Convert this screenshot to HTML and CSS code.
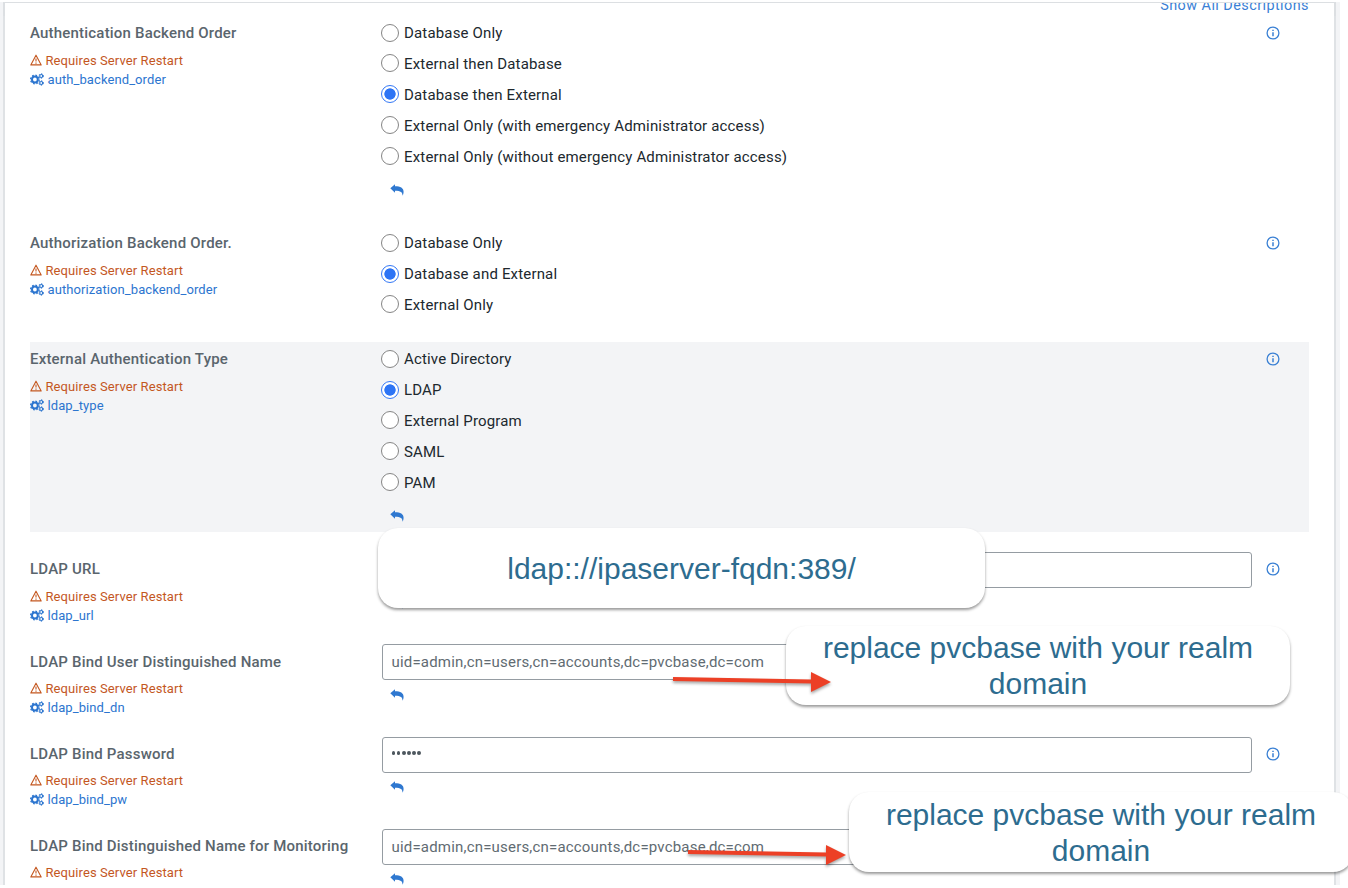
FILE: index.html
```
<!DOCTYPE html>
<html lang="en">
<head>
<meta charset="utf-8">
<title>Authentication settings</title>
<link rel="stylesheet" href="styles.css">
</head>
<body>
<svg class="sprite" width="0" height="0">
  <symbol id="warn" viewBox="0 0 12 12"><path d="M6 1.2 11.2 10.9H.8Z" fill="none" stroke="currentColor" stroke-width="1.1" stroke-linejoin="round"/><path d="M6 4.4v3.2M6 8.5v1.2" stroke="currentColor" stroke-width="1.1"/></symbol>
  <symbol id="gears" viewBox="0 0 14 13"><circle cx="4.9" cy="6.5" r="2.9" fill="none" stroke="currentColor" stroke-width="2"/><circle cx="4.9" cy="6.5" r="4.3" fill="none" stroke="currentColor" stroke-width="1.3" stroke-dasharray="1.7 1.677"/><circle cx="11.2" cy="3" r="1.5" fill="none" stroke="currentColor" stroke-width="1.2"/><circle cx="11.2" cy="3" r="2.3" fill="none" stroke="currentColor" stroke-width=".9" stroke-dasharray="1.2 1.209"/><circle cx="11.2" cy="10" r="1.5" fill="none" stroke="currentColor" stroke-width="1.2"/><circle cx="11.2" cy="10" r="2.3" fill="none" stroke="currentColor" stroke-width=".9" stroke-dasharray="1.2 1.209"/></symbol>
  <symbol id="undo" viewBox="0 0 14 12"><path d="M.3 4.3 5 .3V2.3C10.500 2.300 13.600 4 13.600 8c0 1.500-.4 2.700-1.100 3.700.1-3.400-1.700-4.900-7.500-4.900V8.800Z" fill="currentColor"/></symbol>
  <symbol id="info" viewBox="0 0 14 14"><circle cx="7" cy="7" r="5.9" fill="none" stroke="currentColor" stroke-width="1.3"/><path d="M7 6.200v4M7 3.800v1.300" stroke="currentColor" stroke-width="1.500"/></symbol>
</svg>
<div class="page">
  <div class="topbar"><a class="show-all">Show All Descriptions</a></div>
  <main class="settings">
    <section class="row tall">
      <div class="label"><h3>Authentication Backend Order</h3><p class="restart"><svg><use href="#warn"/></svg>Requires Server Restart</p><a class="key"><svg><use href="#gears"/></svg>auth_backend_order</a></div>
      <div class="field">
        <div class="option"><i class="radio"></i>Database Only</div>
        <div class="option"><i class="radio"></i>External then Database</div>
        <div class="option"><i class="radio on"></i>Database then External</div>
        <div class="option"><i class="radio"></i>External Only (with emergency Administrator access)</div>
        <div class="option"><i class="radio"></i>External Only (without emergency Administrator access)</div>
        <svg class="undo"><use href="#undo"/></svg>
      </div>
      <svg class="info"><use href="#info"/></svg>
    </section>
    <section class="row medium">
      <div class="label"><h3>Authorization Backend Order.</h3><p class="restart"><svg><use href="#warn"/></svg>Requires Server Restart</p><a class="key"><svg><use href="#gears"/></svg>authorization_backend_order</a></div>
      <div class="field">
        <div class="option"><i class="radio"></i>Database Only</div>
        <div class="option"><i class="radio on"></i>Database and External</div>
        <div class="option"><i class="radio"></i>External Only</div>
      </div>
      <svg class="info"><use href="#info"/></svg>
    </section>
    <section class="row tall active">
      <div class="label"><h3>External Authentication Type</h3><p class="restart"><svg><use href="#warn"/></svg>Requires Server Restart</p><a class="key"><svg><use href="#gears"/></svg>ldap_type</a></div>
      <div class="field">
        <div class="option"><i class="radio"></i>Active Directory</div>
        <div class="option"><i class="radio on"></i>LDAP</div>
        <div class="option"><i class="radio"></i>External Program</div>
        <div class="option"><i class="radio"></i>SAML</div>
        <div class="option"><i class="radio"></i>PAM</div>
        <svg class="undo"><use href="#undo"/></svg>
      </div>
      <svg class="info"><use href="#info"/></svg>
    </section>
    <section class="row">
      <div class="label"><h3>LDAP URL</h3><p class="restart"><svg><use href="#warn"/></svg>Requires Server Restart</p><a class="key"><svg><use href="#gears"/></svg>ldap_url</a></div>
      <div class="field"><div class="input"></div><svg class="undo"><use href="#undo"/></svg></div>
      <svg class="info"><use href="#info"/></svg>
    </section>
    <section class="row">
      <div class="label"><h3>LDAP Bind User Distinguished Name</h3><p class="restart"><svg><use href="#warn"/></svg>Requires Server Restart</p><a class="key"><svg><use href="#gears"/></svg>ldap_bind_dn</a></div>
      <div class="field"><div class="input">uid=admin,cn=users,cn=accounts,dc=pvcbase,dc=com</div><svg class="undo"><use href="#undo"/></svg></div>
    </section>
    <section class="row">
      <div class="label"><h3>LDAP Bind Password</h3><p class="restart"><svg><use href="#warn"/></svg>Requires Server Restart</p><a class="key"><svg><use href="#gears"/></svg>ldap_bind_pw</a></div>
      <div class="field"><div class="input secret"><b></b><b></b><b></b><b></b><b></b><b></b></div><svg class="undo"><use href="#undo"/></svg></div>
      <svg class="info"><use href="#info"/></svg>
    </section>
    <section class="row">
      <div class="label"><h3>LDAP Bind Distinguished Name for Monitoring</h3><p class="restart"><svg><use href="#warn"/></svg>Requires Server Restart</p></div>
      <div class="field"><div class="input">uid=admin,cn=users,cn=accounts,dc=pvcbase,dc=com</div><svg class="undo"><use href="#undo"/></svg></div>
    </section>
  </main>
</div>
<aside class="callout url">ldap:://ipaserver-fqdn:389/</aside>
<aside class="callout bind">replace pvcbase with your realm domain</aside>
<aside class="callout monitor">replace pvcbase with your realm domain</aside>
<svg class="arrow first" viewBox="0 0 160 24"><path d="M0 7.100 139 9.500" stroke="#ec4026" stroke-width="4"/><path d="M138 0 158 10 138 20Z" fill="#ec4026"/></svg>
<svg class="arrow second" viewBox="0 0 160 24"><path d="M0 7.100 139 9.500" stroke="#ec4026" stroke-width="4"/><path d="M138 0 158 10 138 20Z" fill="#ec4026"/></svg>
</body>
</html>
```
FILE: styles.css
```
* { box-sizing: border-box; }
body { margin: 0; width: 1348px; height: 888px; position: relative; overflow: hidden; background: #fff; font-family: Roboto, sans-serif; }
.sprite { display: none; }
svg { display: block; overflow: visible; flex: none; }
.page { width: 1340px; height: 885px; padding: 2px 4px 0 3px; background: linear-gradient(#fff 2px, #f3f4f6 2px); overflow: hidden; }
.topbar { height: 14px; overflow: hidden; display: flex; justify-content: flex-end; padding-right: 25px; background: #fff; border: solid #dcdfe2; border-width: 1px 2px 0; }
.show-all { font-size: 14.4px; line-height: 18px; margin-top: -6px; letter-spacing: .45px; color: #3a7fd5; }
.settings { height: 869px; overflow: hidden; display: flex; flex-direction: column; gap: 20px; padding: 0 25px; background: #fff; border: solid #dfe2e5; border-width: 0 2px; }
.row { flex: none; height: 72.200px; display: flex; }
.row.tall { height: 190.100px; }
.row.medium { height: 96px; }
.active { background: #f3f4f6; }
.label { width: 351.500px; flex: none; padding-top: 7.200px; }
h3 { margin: 0 0 7.500px; font-size: 15px; line-height: 20px; font-weight: 500; letter-spacing: .2px; color: #5a656d; white-space: nowrap; }
.restart, .key { display: flex; align-items: center; margin: 0; height: 19px; font-size: 13px; letter-spacing: .090px; white-space: nowrap; }
.restart { color: #c4571f; gap: 3.500px; }
.restart svg { width: 12px; height: 12px; margin-top: -1px; }
.key { color: #2c75cf; gap: 3.500px; }
.key svg { width: 14px; height: 13px; }
.field { width: 870.500px; flex: none; }
.option { height: 30.850px; padding-top: 3.800px; display: flex; align-items: center; gap: 5px; font-size: 15px; letter-spacing: .170px; color: #20282e; margin-left: -.5px; }
.radio { width: 18px; height: 18px; margin-top: -1.500px; border: 1.500px solid #858585; border-radius: 50%; background: #fff; }
.radio.on { border-color: #3478f6; background: radial-gradient(circle, #2d74f5 5.300px, #fff 6px); }
.undo { width: 14px; height: 12px; margin: 14px 0 0 8.500px; color: #2f78d0; }
.input + .undo { margin-top: 8.500px; }
.input { height: 36px; border: 1.500px solid #959ca2; border-radius: 3px; display: flex; align-items: center; padding: 0 0 0 9px; background: #fff; font-size: 15px; letter-spacing: .190px; color: #616b72; }
.secret { gap: 1.400px; padding-bottom: 3px; }
.secret b { width: 3.800px; height: 3.800px; border-radius: 50%; background: #4d575e; }
.info { width: 14px; height: 14px; margin: 10px 0 0 14px; color: #3a80d4; }
.callout { position: absolute; display: flex; align-items: center; justify-content: center; text-align: center; background: #fff; border-radius: 20px; box-shadow: 0 2px 3px rgba(0,0,0,.4); font: 30px/36px "Liberation Sans", sans-serif; color: #2d6c8f; }
.url { left: 378px; top: 528px; width: 607px; height: 80px; padding-top: 2px; }
.bind { left: 786px; top: 626px; width: 504px; height: 79px; padding: 0 20px; }
.monitor { left: 849px; top: 792px; width: 504px; height: 80px; padding: 1px 20px 0; }
.arrow { position: absolute; width: 160px; height: 24px; filter: drop-shadow(0 2px 1.500px rgba(0,0,0,.35)); }
.first { left: 673px; top: 672px; }
.second { left: 688px; top: 845px; }
```
